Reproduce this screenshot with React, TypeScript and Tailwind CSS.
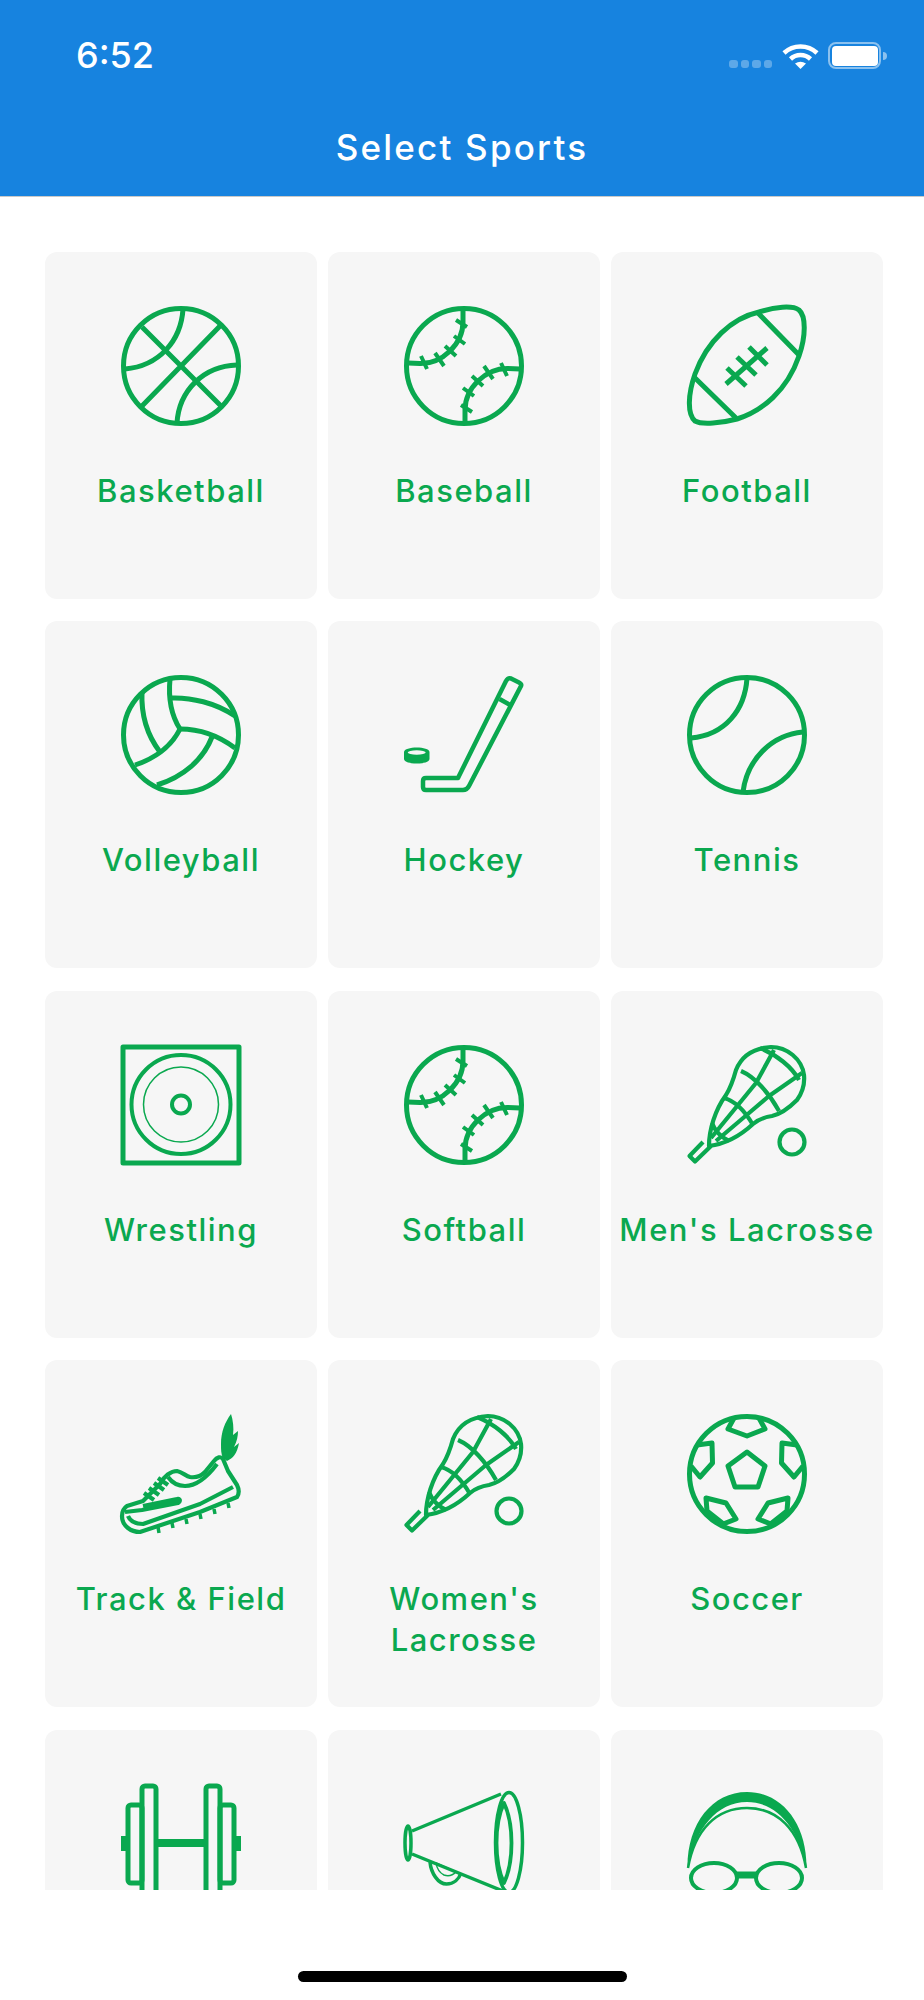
import type { ReactNode } from 'react';

const GREEN = '#0aa84f';
const CARD = '#f6f6f6';

function Icon({ children, sw = 5 }: { children: ReactNode; sw?: number }) {
  return (
    <svg
      viewBox="0 0 120 120"
      fill="none"
      stroke={GREEN}
      strokeWidth={sw}
      strokeLinejoin="round"
      className="h-[120px] w-[120px] shrink-0 overflow-visible"
    >
      {children}
    </svg>
  );
}

function Basketball() {
  return (
    <Icon>
      <circle cx="60" cy="60" r="57.500" />
      <path d="M62 3C60 35 38 60 4 63" />
      <path d="M56 117C58 85 82 60 116 59" />
      <path d="M21 21L100 100M21 100L99 20" />
    </Icon>
  );
}

/* one seam, second one is the same turned 180 */
function Seam() {
  return (
    <>
      <path d="M59 3V16C59 38 38 58 16 57.5L4 57" />
      <path
        strokeWidth="4"
        d="M52 14L63 21M50 30L61 38M41 40L52 50M31 47L40 60M17 50L23 63"
      />
    </>
  );
}

function Baseball() {
  return (
    <Icon>
      <circle cx="60" cy="60" r="57.500" />
      <Seam />
      <g transform="rotate(180 60 60)">
        <Seam />
      </g>
    </Icon>
  );
}

function Football() {
  return (
    <Icon>
      <path d="M8 115C0 108 1 88 8 68C20 35 45 12 72 6C88 1 105 -1 112 4C119 10 119 30 112 50C100 85 75 105 50 113C35 117 15 119 8 115Z" />
      <path d="M7 71L49 112M71 7L113 50" />
      <path d="M39 78L80 42M40 62L59 80M50 51L69 69M62 41L80 59" />
    </Icon>
  );
}

function Volleyball() {
  return (
    <Icon>
      <circle cx="60" cy="60" r="57.500" />
      <path d="M49 4C47 25 50 40 59 54" />
      <path d="M49 23C70 22 95 28 114 41" />
      <path d="M59 54C80 54 98 61 114 73" />
      <path d="M59 54C50 72 35 83 14 90" />
      <path d="M21 17C20 40 26 60 39 77" />
      <path d="M91 62C82 85 62 102 36 110" />
    </Icon>
  );
}

function Hockey() {
  return (
    <Icon sw={4.500}>
      <path d="M107 3.5L115 7.5Q118 9 117 11L65 111Q63 115 59 115L22 115Q19 115 19 112L19 106Q19 103 22 103L54 103L102 6Q104 2.5 107 3.5Z" />
      <path d="M95.5 24L108 31" />
      <path
        fill={GREEN}
        stroke="none"
        d="M0 77C0 71 25.500 71 25.500 77V84C25.500 90 0 90 0 84Z"
      />
      <ellipse cx="12.700" cy="77.500" rx="9" ry="2.200" fill={CARD} stroke="none" />
    </Icon>
  );
}

function Tennis() {
  return (
    <Icon>
      <circle cx="60" cy="60" r="57.500" />
      <path d="M60 3C58 35 38 60 4 63" />
      <path d="M116 57C84 60 60 85 56 117" />
    </Icon>
  );
}

function Wrestling() {
  return (
    <Icon>
      <rect x="2" y="2" width="116" height="116" />
      <circle cx="60" cy="59.500" r="49.500" strokeWidth="4" />
      <circle cx="60" cy="59.500" r="37.500" strokeWidth="1.500" />
      <circle cx="60" cy="59.500" r="9" strokeWidth="4" />
    </Icon>
  );
}

function Lacrosse() {
  return (
    <Icon sw={4.200}>
      <path d="M22 101C22 85 28 65 39 50C44 42 46 36 49 25C55 10 68 3 84 2C100 2 115 14 117 30C118 40 115 48 110 55C102 63 94 69 85 71C78 72 72 74 66 79C52 92 38 99 22 101Z" />
      <path d="M16 97L2.500 111L8 116.500L24 101" />
      <path d="M87 5L69 38L24 93" />
      <path d="M115 28L82 51L62 68L29 96" />
      <path d="M73 3C90 10 105 22 112 35" />
      <path d="M54 26C68 32 82 48 92 66" />
      <path d="M37 53C48 56 58 66 66 80" />
      <path d="M25 78C28 86 34 92 42 96" />
      <circle cx="105" cy="97" r="12.500" />
    </Icon>
  );
}

function Shoe() {
  return (
    <Icon sw={4.200}>
      <path
        fill={GREEN}
        stroke="none"
        d="M110 0C104 8 100 18 100 30C100 36 100 40 102 44L106 47C112 44 116 40 118 29L113 33C116 27 117 22 117 17L112 21C113 14 112 6 110 0Z"
      />
      <path d="M1 102C1 97 3 94 6 92L22 87L39 70C43 62 50 57 56 57C61 58 65 62 69 63C75 64 80 62 84 58L93 47C96 43 100 42 102 45L107 57L116 71C118 75 118 80 116 83L79 98L19 118C10 118 1 112 1 102Z" />
      <path d="M47 63C52 70 58 72 64 72C76 72 87 62 96 50" />
      <path d="M4 98L21 96L57 89C60 87 59 84 56 85L22 92" />
      <path d="M7 102C9 107 14 110 22 110L79 90L112 73" />
      <path d="M23 79L33 86M28 74L38 81M33 69L43 76M37 64L47 71" />
      <path strokeWidth="3.500" d="M37 113L38 119M51 109L52 114M65 105L66 110M79 100L80 105M93 95L94 100M107 89L108 94" />
    </Icon>
  );
}

function Soccer() {
  return (
    <Icon>
      <circle cx="60" cy="60" r="57.500" />
      <path d="M60 38L78 52L71 73H48L41 52Z" />
      <path d="M47 4L41 15L60 22L78 15L72 4" />
      <path d="M10 31L25 29L25.500 49L13 63L4 52" />
      <path d="M110 31L95 29L94.500 49L107 63L116 52" />
      <path d="M39 112L20 97L19 84L39 89L49 105L36 110" />
      <path d="M81 112L100 97L101 84L81 89L71 105L84 110" />
    </Icon>
  );
}

function Dumbbell() {
  return (
    <Icon>
      <rect x="21" y="2" width="14" height="116" rx="3" />
      <rect x="85" y="2" width="14" height="116" rx="3" />
      <rect x="7" y="21" width="14" height="78" rx="3" />
      <rect x="99" y="21" width="14" height="78" rx="3" />
      <path fill={GREEN} stroke="none" d="M0 52H5V67H0ZM115 52H120V67H115ZM36 55H84V63H36Z" />
    </Icon>
  );
}

function Megaphone() {
  return (
    <Icon sw={3.500}>
      <ellipse cx="105" cy="58.500" rx="13.500" ry="50" />
      <path d="M100 19C90 40 90 78 100 99C110 78 110 40 100 19Z" strokeWidth="3.800" />
      <path d="M97 10L8 47M8 70L99 107" />
      <ellipse cx="4" cy="59" rx="3" ry="17" />
      <path d="M26 78C27 89 34 100 42.500 100C50 100 55 95 57 89" />
      <path strokeWidth="1.500" d="M32 79L52 88C48 92 43 92 40 91C36 89 33 85 32 79Z" />
    </Icon>
  );
}

function SwimCap() {
  return (
    <Icon sw={4}>
      <path
        fill={GREEN}
        stroke="none"
        d="M0.500 84C0 40 25 8 60 8C95 8 120 40 119.500 84C112 45 90 18 60 18C30 18 8 45 0.500 84Z"
      />
      <path strokeWidth="2.500" d="M1 84C8 45 30 24 60 24C90 24 112 45 119 84" />
      <ellipse cx="27" cy="94" rx="23" ry="15" />
      <ellipse cx="92" cy="94" rx="23" ry="15" />
      <path strokeWidth="7" d="M50 91H70" />
    </Icon>
  );
}

const SPORTS: { name: string; icon: ReactNode }[] = [
  { name: 'Basketball', icon: <Basketball /> },
  { name: 'Baseball', icon: <Baseball /> },
  { name: 'Football', icon: <Football /> },
  { name: 'Volleyball', icon: <Volleyball /> },
  { name: 'Hockey', icon: <Hockey /> },
  { name: 'Tennis', icon: <Tennis /> },
  { name: 'Wrestling', icon: <Wrestling /> },
  { name: 'Softball', icon: <Baseball /> },
  { name: "Men's Lacrosse", icon: <Lacrosse /> },
  { name: 'Track & Field', icon: <Shoe /> },
  { name: "Women's Lacrosse", icon: <Lacrosse /> },
  { name: 'Soccer', icon: <Soccer /> },
  { name: '', icon: <Dumbbell /> },
  { name: '', icon: <Megaphone /> },
  { name: '', icon: <SwimCap /> },
];

function StatusIcons() {
  return (
    <div className="flex items-end">
      <div className="mb-[1px] flex gap-[3px]">
        {[0, 1, 2, 3].map((i) => (
          <div key={i} className="h-[8px] w-[8.500px] rounded-[3px] bg-white/30" />
        ))}
      </div>
      <svg viewBox="0 0 37 26" className="ml-[10px] h-[26px] w-[37px]">
        <path d="M2 10A24 24 0 0 1 35 10" fill="none" stroke="#fff" strokeWidth="4.500" />
        <path d="M8.500 16A14.500 14.500 0 0 1 28.500 16" fill="none" stroke="#fff" strokeWidth="4.500" />
        <path d="M13 20.500Q18.500 17 24 20.500L18.500 26Z" fill="#fff" />
      </svg>
      <div className="ml-[9px] flex items-center">
        <div className="flex h-[27px] w-[53px] items-center justify-center rounded-[8px] border-[2px] border-white/50">
          <div className="h-[20px] w-[46px] rounded-[4px] bg-white" />
        </div>
        <div className="ml-[2px] h-[8px] w-[4px] rounded-r-full bg-white/50" />
      </div>
    </div>
  );
}

export default function App() {
  return (
    <div className="flex h-[2000px] w-[924px] flex-col overflow-hidden bg-white font-['Inter',sans-serif]">
      <header className="h-[197px] shrink-0 border-b border-[#c9c9c9] bg-[#1783df] text-white">
        <div className="flex items-end justify-between pl-[76px] pr-[37px] pt-[42px]">
          <span className="text-[36px] font-medium leading-[27px]">6:52</span>
          <StatusIcons />
        </div>
        <h1 className="mt-[53px] text-center text-[35px] font-medium leading-[50px] tracking-[2.200px]">
          Select Sports
        </h1>
      </header>

      <main className="h-[1693px] shrink-0 overflow-hidden pl-[45px] pr-[41px] pt-[54.500px]">
        <div className="grid grid-cols-3 gap-x-[11px] gap-y-[22.500px]">
          {SPORTS.map((s, i) => (
            <div
              key={i}
              className="flex h-[347px] flex-col items-center rounded-[12px] bg-[#f6f6f6] px-1 pt-[54px]"
            >
              {s.icon}
              <div className="mt-[44px] text-center text-[31px] font-medium leading-[41px] tracking-[1.500px] text-[#0aa84f]">
                {s.name}
              </div>
            </div>
          ))}
        </div>
      </main>

      <div className="flex flex-1 justify-center pt-[81px]">
        <div className="h-[11px] w-[329px] rounded-full bg-black" />
      </div>
    </div>
  );
}
